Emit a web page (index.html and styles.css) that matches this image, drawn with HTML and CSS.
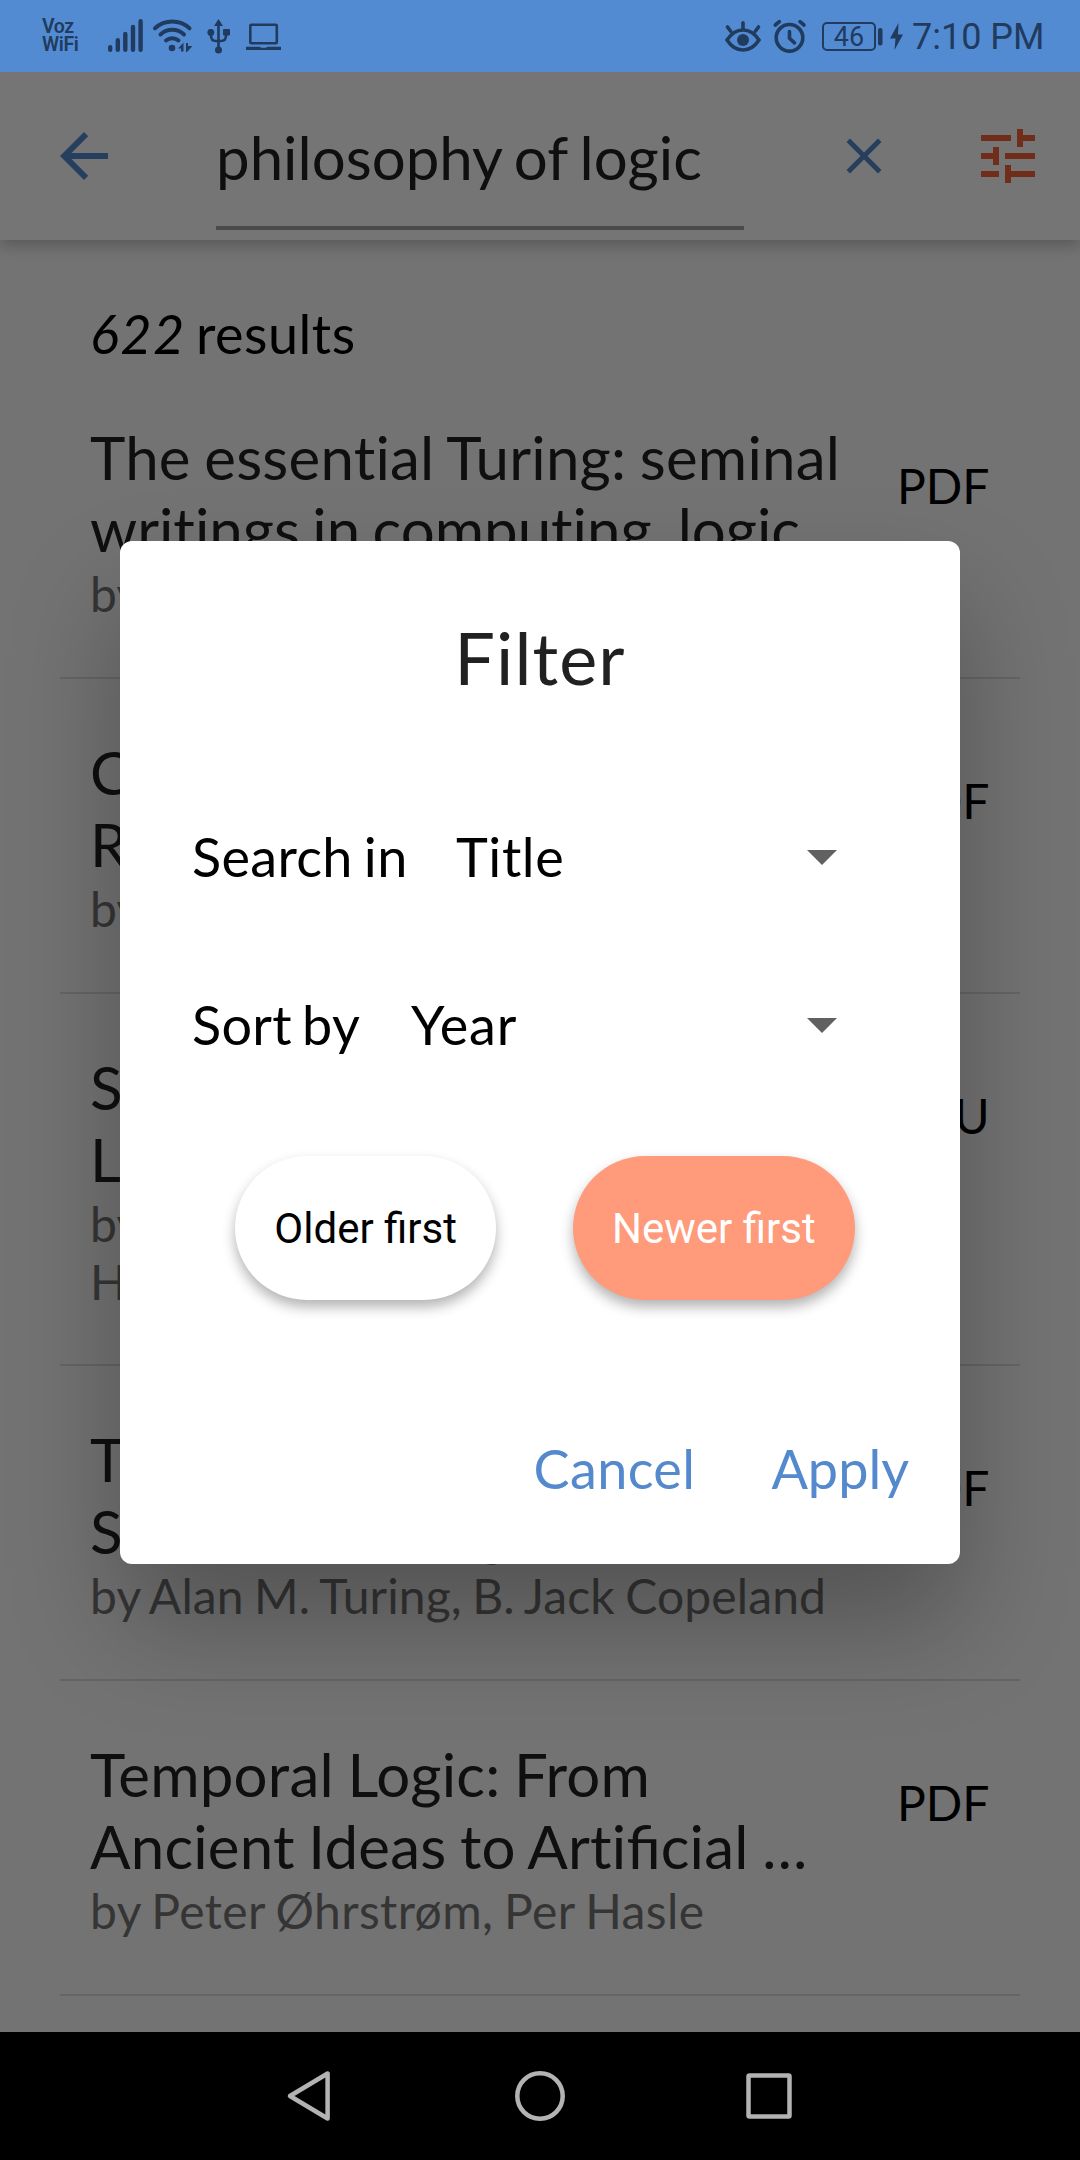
FILE: index.html
```html
<!DOCTYPE html>
<html lang="en">
<head>
<meta charset="utf-8">
<title>Search results</title>
<link rel="stylesheet" href="styles.css">
</head>
<body>
<div class="screen">
  <header class="status">
    <div class="vowifi"><span>Voz</span><span>WiFi</span></div>
    <svg class="status-left" width="180" height="72" viewBox="105 0 180 72">
      <g fill="none" stroke="currentColor" stroke-width="4.4" stroke-linecap="round">
        <path d="M110.2 47.2v2.6M117.8 40.3v9.5M125.3 34v15.8M133 27v22.8M140.6 21.2v28.6"/>
        <path stroke-width="4" d="M155 28.3a25.5 25.5 0 0 1 34.5 0M160.5 34.5a17 17 0 0 1 23.5 0M166 40.5a9.5 9.5 0 0 1 12.5 0"/>
        <path stroke-width="2.6" stroke-linecap="butt" d="M218.5 25v25M211 33v2.5q0 5.5 5 5.5h5q5 0 5-5.5V32"/>
        <rect x="250.3" y="24.8" width="26.5" height="18.5" rx="1" stroke-width="2.6"/>
      </g>
      <g fill="currentColor">
        <circle cx="172" cy="48" r="3.3"/>
        <path d="M178 48.5l5.5-6V51.5h-2.500v-3zM186 43h2v3h4.500l-5.500 6h-1z"/>
        <path d="M218.500 19l4.500 7h-9z"/>
        <circle cx="218.500" cy="50" r="3.500"/><circle cx="210.800" cy="32.500" r="3.400"/>
        <rect x="223" y="29" width="7" height="6.500" rx="1"/>
        <path d="M246 46.800h14l1 1h5l1-1h14V50h-35z"/>
      </g>
    </svg>
    <svg class="status-right" width="84" height="72" viewBox="724 0 84 72">
      <g fill="none" stroke="currentColor" stroke-width="3.600" stroke-linecap="round">
        <path d="M727 40q6.500-10 16-10t16 10q-6.500 10-16 10t-16-10z"/>
        <path d="M743 22.800V29M727.500 27l3.200 4.300M758.500 27l-3.200 4.300"/>
        <circle cx="789.500" cy="37.800" r="13.300"/>
        <path d="M789.500 31.500v6.800l5 4.500M775.300 25l4-3.300M804 25l-4-3.300"/>
      </g>
      <circle cx="743" cy="40" r="6" fill="currentColor"/>
    </svg>
    <div class="battery">46</div>
    <svg class="power" width="27" height="72" viewBox="877 0 27 72" fill="currentColor">
      <rect x="878" y="28" width="4.500" height="17.500" rx="2"/>
      <path d="M898.500 23l-8.500 15.500h5.500l-1 11.500L903 34.500h-5z"/>
    </svg>
    <time class="clock">7:10 PM</time>
  </header>

  <div class="app">
    <div class="appbar">
      <svg class="back" width="72" height="72" viewBox="0 0 24 24"><path d="M20 11H7.830l5.590-5.590L12 4l-8 8 8 8 1.410-1.410L7.830 13H20v-2z"/></svg>
      <div class="query">philosophy of logic</div>
      <svg class="clear" width="60" height="60" viewBox="0 0 24 24"><path d="M19 6.410L17.590 5 12 10.590 6.410 5 5 6.410 10.590 12 5 17.590 6.410 19 12 13.410 17.590 19 19 17.590 13.410 12z"/></svg>
      <svg class="tune" width="72" height="72" viewBox="0 0 24 24"><path d="M3 17v2h6v-2H3zM3 5v2h10V5H3zm10 16v-2h8v-2h-8v-2h-2v6h2zM7 9v2H3v2h4v2h2V9H7zm14 4v-2H11v2h10zm-6-4h2V7h4V5h-4V3h-2v6z"/></svg>
    </div>
    <main class="results">
      <p class="count"><em>622</em> results</p>
      <article class="item">
        <div class="info"><h2>The essential Turing: seminal<br><span class="tight">writings in computing, logic</span></h2><p>by Alan M. Turing</p></div>
        <span class="type">PDF</span>
      </article>
      <article class="item">
        <div class="info"><h2>Causality<br>Reason</h2><p>by Turing</p></div>
        <span class="type">PDF</span>
      </article>
      <article class="item">
        <div class="info"><h2>Studies in<br>Logic</h2><p>by Per<br>Hasle</p></div>
        <span class="type">DJVU</span>
      </article>
      <article class="item">
        <div class="info"><h2>The Essential Turing:<br>Seminal Writings in …</h2><p>by Alan M. Turing, B. Jack Copeland</p></div>
        <span class="type">PDF</span>
      </article>
      <article class="item">
        <div class="info"><h2>Temporal Logic: From<br>Ancient Ideas to Arti<span class="lig">fi</span>cial …</h2><p class="loose">by Peter Øhrstrøm, Per Hasle</p></div>
        <span class="type">PDF</span>
      </article>
    </main>
    <div class="scrim"></div>
    <section class="dialog">
      <h1>Filter</h1>
      <div class="field"><span class="label">Search in</span><span class="value">Title</span><svg width="72" height="72" viewBox="0 0 24 24"><path d="M7 10l5 5 5-5z"/></svg></div>
      <div class="field sort"><span class="label">Sort by</span><span class="value">Year</span><svg width="72" height="72" viewBox="0 0 24 24"><path d="M7 10l5 5 5-5z"/></svg></div>
      <div class="order">
        <button class="pill">Older first</button>
        <button class="pill selected">Newer first</button>
      </div>
      <div class="actions"><button class="cancel">Cancel</button><button>Apply</button></div>
    </section>
  </div>

  <nav class="navbar">
    <svg width="1080" height="128" viewBox="0 2032 1080 128" fill="none" stroke="#b3b3b3" stroke-width="4.500" stroke-linejoin="round">
      <path d="M327.600 2073.500v45L290 2096z"/>
      <circle cx="540" cy="2096" r="22.700"/>
      <rect x="748.500" y="2075.500" width="41" height="41" rx="1"/>
    </svg>
  </nav>
</div>
</body>
</html>
```
FILE: styles.css
```css
* { box-sizing: border-box; margin: 0; padding: 0; }
body { font-family: Lato, sans-serif; width: 1080px; height: 2160px; overflow: hidden; font-variant-ligatures: none; }
svg { display: block; flex: none; }
button { border: 0; background: none; font: inherit; color: inherit; white-space: nowrap; }
.screen { display: flex; flex-direction: column; width: 1080px; height: 2160px; }
.lig { font-variant-ligatures: common-ligatures; letter-spacing: 0; }

.status { display: flex; align-items: center; height: 72px; padding-left: 42px; background: #538bd3; color: #203b5e; font-family: Roboto, sans-serif; flex: none; }
.vowifi { display: flex; flex-direction: column; width: 63px; font-size: 19.500px; line-height: 18px; font-weight: 600; letter-spacing: -.4px; }
.status-right { margin-left: 439px; }
.battery { width: 54px; height: 29px; margin: 0 1px 0 14px; border: 2px solid; border-radius: 5px; font-size: 27px; line-height: 26px; text-align: center; }
.clock { margin-left: 8px; font-size: 36px; line-height: 72px; padding-top: 2px; white-space: nowrap; }

.app { position: relative; display: flex; flex-direction: column; height: 1960px; background: #fafafa; overflow: hidden; flex: none; }
.appbar { position: relative; display: flex; align-items: center; height: 168px; padding-left: 48px; background: #fff; flex: none; box-shadow: 0 6px 14px rgba(0,0,0,.22); }
.back, .clear { fill: #5589cd; }
.query { align-self: flex-start; width: 528px; height: 158px; margin-left: 96px; padding: 49px 0 0; border-bottom: 4px solid #a4a4a4; font-size: 60px; line-height: 72px; color: #212121; white-space: nowrap; word-spacing: -3px; }
.clear { margin-left: 90px; }
.tune { margin-left: 78px; fill: #f4623a; }

.results { padding: 61px 60px 0; }
.count { padding-left: 30px; height: 63px; font-size: 54px; line-height: 65px; color: #000; letter-spacing: .5px; word-spacing: -4px; }
.count em { letter-spacing: 1.400px; }
.item { display: flex; justify-content: space-between; padding: 57px 30.500px 54px 30px; border-bottom: 2px solid #dcdcdc; }
.info h2 { font-size: 60px; font-weight: 400; line-height: 72px; color: #212121; white-space: nowrap; letter-spacing: .21px; word-spacing: -2px; }
.info .tight { letter-spacing: 0; word-spacing: -3px; }
.info p { font-size: 48px; line-height: 57.500px; color: #757575; white-space: nowrap; letter-spacing: .12px; word-spacing: -2px; }
.info .loose { letter-spacing: .4px; }
.info { min-height: 202px; }
.type { padding-top: 36px; font-size: 48px; line-height: 58px; color: #000; }

.scrim { position: absolute; inset: 0; background: rgba(0,0,0,.54); }
.dialog { position: absolute; left: 120px; top: 468.500px; width: 840px; height: 1023px; padding: 73px 72px 0; border-radius: 12px; background: #fff; box-shadow: 0 60px 110px rgba(0,0,0,.27); }
.dialog h1 { font-size: 72px; font-weight: 400; line-height: 86px; color: #212121; text-align: center; letter-spacing: 1.100px; }
.field { display: flex; align-items: center; height: 168px; font-size: 54px; line-height: 65px; color: #000; }
.dialog h1 + .field { margin-top: 72px; }
.label { width: 264px; padding-top: 2px; letter-spacing: .3px; word-spacing: -3px; }
.value { padding-top: 2px; letter-spacing: .6px; }
.sort .label { width: 219px; word-spacing: -4px; }
.sort .value { letter-spacing: .9px; }
.field svg { margin: 0 30px 0 auto; fill: #616161; }
.order { display: flex; justify-content: center; gap: 77px; margin: 48px 0 0 10px; }
.pill { height: 144px; padding: 1px 39px 0; border-radius: 72px; background: #fff; color: #000; font-family: Roboto, sans-serif; font-size: 42px; font-variant-ligatures: normal; box-shadow: 0 7px 13px rgba(0,0,0,.3); }
.pill.selected { background: #ff9a7b; color: #fff; }
.actions { display: flex; justify-content: flex-end; gap: 76px; margin: 136px -21px 0 0; font-size: 54px; line-height: 65px; color: #5589cd; }
.cancel { letter-spacing: .4px; }
.navbar { height: 128px; background: #000; flex: none; }
```
